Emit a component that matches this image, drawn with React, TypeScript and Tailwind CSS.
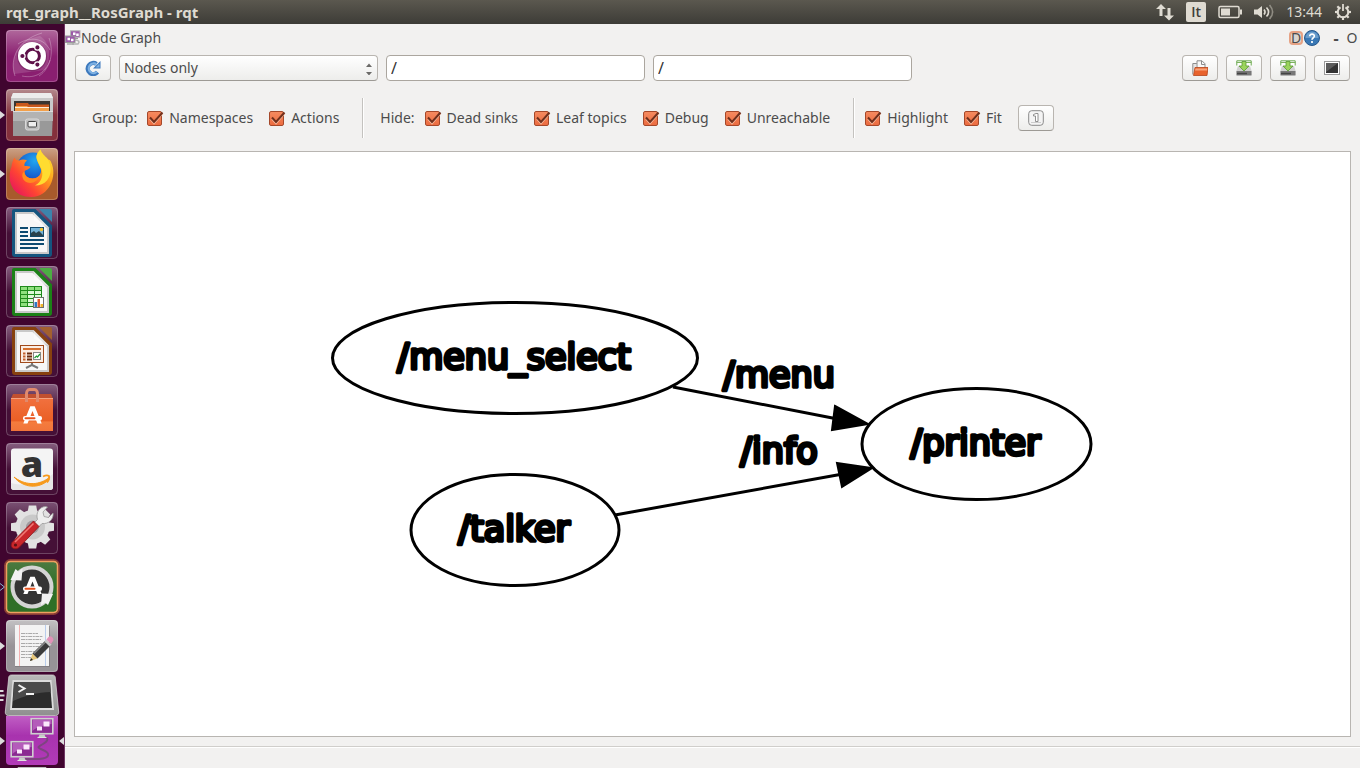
import React, { useId } from "react";

/* ---------- Launcher artwork ---------- */

type TileProps = { from: string; to: string; edge?: string; children: React.ReactNode };

function Tile({ from, to, edge = "#ffffff", children }: TileProps) {
  const id = useId();
  return (
    <svg viewBox="0 0 52 52" className="block h-[52px] w-[52px] overflow-visible" aria-hidden="true">
      <defs>
        <linearGradient id={id} x1="0" y1="0" x2="0" y2="1">
          <stop offset="0" stopColor={from} />
          <stop offset="0.5" stopColor={to} />
          <stop offset="1" stopColor={to} />
        </linearGradient>
      </defs>
      <rect x="0" y="0" width="52" height="52" rx="4" fill={`url(#${id})`} />
      <rect x="0.5" y="0.5" width="51" height="51" rx="4" fill="none" stroke={edge} strokeOpacity="0.22" />
      {children}
    </svg>
  );
}

function DashIcon() {
  return (
    <Tile from="#b0689c" to="#8a1f70">
      <path d="M8 44C4 26 14 9 34 6c10 6 12 22 5 34" fill="#fff" fillOpacity=".14" />
      <path d="M9 46C3 28 12 10 36 3M43 8c5 14 2 30-10 38M12 14c12-8 26-6 32 6M16 46c14 3 24-4 28-16" fill="none" stroke="#fff" strokeOpacity=".28" />
      <circle cx="26" cy="26.5" r="15" fill="#5d1049" fillOpacity=".4" />
      <circle cx="26" cy="26" r="14" fill="#fff" />
      <circle cx="26.6" cy="26" r="6.8" fill="none" stroke="#5e1049" strokeWidth="3" />
      <g stroke="#fff" strokeWidth="1.2">
        <circle cx="16.4" cy="26" r="2.7" fill="#5e1049" />
        <circle cx="31.4" cy="17.4" r="2.7" fill="#5e1049" />
        <circle cx="31.4" cy="34.6" r="2.7" fill="#5e1049" />
      </g>
    </Tile>
  );
}

function FilesIcon() {
  return (
    <Tile from="#b48a8d" to="#84303c">
      <path d="M7 4h38l2 5v13H5V9z" fill="#c9c9c9" />
      <path d="M7 4h38l2 5H5z" fill="#ececec" />
      <rect x="8" y="12" width="36" height="11" fill="#3a3532" />
      <path d="M10 14h12l1 1.5h20V24H10z" fill="#c9581d" />
      <path d="M9 17h12l1 1h21v6H9z" fill="#f3a04a" />
      <path d="M9 18.5h34" stroke="#fff" strokeOpacity=".8" />
      <path d="M7 22h40l-1 25H7z" fill="#999" />
      <path d="M7 22h40v10H7z" fill="#b3b3b3" />
      <path d="M7 22.5h40" stroke="#ddd" />
      <rect x="19.5" y="30" width="13.5" height="11" rx="2" fill="#bdbdbd" stroke="#d9d9d9" />
      <rect x="22" y="32.5" width="8.5" height="5.5" rx="1" fill="#eee" stroke="#444" />
    </Tile>
  );
}

function FirefoxIcon() {
  const id = useId();
  return (
    <Tile from="#cba186" to="#a85a2c">
      <defs>
        <linearGradient id={id + "f"} x1="0.9" y1="0.1" x2="0.1" y2="0.9">
          <stop offset="0" stopColor="#ffdf2e" />
          <stop offset="0.35" stopColor="#ff9a1c" />
          <stop offset="0.7" stopColor="#ff4433" />
          <stop offset="1" stopColor="#e8185b" />
        </linearGradient>
        <radialGradient id={id + "g"} cx="0.55" cy="0.25" r="0.8">
          <stop offset="0" stopColor="#22a7f0" />
          <stop offset="0.6" stopColor="#1660cf" />
          <stop offset="1" stopColor="#252a86" />
        </radialGradient>
      </defs>
      <circle cx="27" cy="21" r="16.5" fill={`url(#${id}g)`} />
      <path d="M8.500 9.500c1 2 2 3 4.500 3 3-1.500 6-1 8 0-2 1.500-3 3.500-2.500 5.500 3 0 5.500 0 6 1-1 2-4.500 3-6 4-.6 4.500 3.500 7.500 8 7.500 6 0 9-4.500 8.500-9C34 18 30 12 30.500 8 31 5 33 3 34.500 1.500c1 4.500 4.500 6 7.500 10 1.500 0 2.500 1 3 2.500 7 14-2 35-19.500 35C9 49 2 37 4 24c.5-3 1-4 1.500-5 .2-3.500 1.400-7 3-9.500z" fill={`url(#${id}f)`} />
      <path d="M34.500 1.500c1 4.500 4.500 6 7.500 10 3.500 6 4 15-1 21-3 3.500-7 5-12 5 7-3.500 8.500-11 6.500-16C33.500 16 30 12 30.500 8 31 5 33 3 34.500 1.500z" fill="#ffdc30" />
      <path d="M18.500 23c-.6 4.500 3.500 7.500 8 7.500 3 0 5.500-1 7-3-1.500 6-7 8.500-12 7-3.500-1-6-5-5-9z" fill="#ff8a1f" />
    </Tile>
  );
}

type DocProps = { color: string; light: string; children: React.ReactNode };

function OfficeIcon({ color, light, children }: DocProps) {
  return (
    <Tile from="#865f7f" to="#451037">
      <path d="M8 2h21.500L46 18.500V47a3 3 0 0 1-3 3H9a3 3 0 0 1-3-3V4a2 2 0 0 1 2-2z" fill={color} />
      <path d="M33 2h11a2 2 0 0 1 2 2v11z" fill={light} />
      <path d="M9 5h18.500L43 20.500V47H9z" fill="#c9c9c9" />
      <path d="M11 7h15.500L41 21.500V45H11z" fill="#f7f7f7" />
      <path d="M27.500 5L43 20.500 28 14z" fill="#fff" fillOpacity=".5" />
      {children}
    </Tile>
  );
}

function WriterIcon() {
  return (
    <OfficeIcon color="#14557f" light="#3c84ac">
      <path d="M14 21h8M14 25h8M14 29h8M14 33h24M14 37h24M14 41h18" stroke="#0d4a70" strokeWidth="2" />
      <rect x="24" y="20" width="14" height="10" fill="#124a6c" />
      <rect x="25" y="21" width="12" height="8" fill="#74b3d8" />
      <circle cx="35.500" cy="22.500" r="1.700" fill="#f2c12e" />
      <path d="M25 29v-3l3-2 2 2 3-2 4 4v1z" fill="#29424c" />
    </OfficeIcon>
  );
}

function CalcIcon() {
  return (
    <OfficeIcon color="#1b8117" light="#4cad43">
      <rect x="14" y="20" width="22" height="21" fill="#1f8a1c" />
      <g fill="#8fe07e">
        <path d="M15 21h6v3h-6zM22 21h6v3h-6zM29 21h6v3h-6z" />
        <path d="M15 25h6v3h-6zM15 29h6v3h-6zM15 33h6v3h-6zM15 37h6v3h-6z" />
      </g>
      <g fill="#dcf7d6">
        <path d="M22 25h6v3h-6zM29 25h6v3h-6zM22 29h6v3h-6zM29 29h6v3h-6zM22 33h6v3h-6zM22 37h6v3h-6z" />
      </g>
      <rect x="27.500" y="31.500" width="10" height="10" fill="#fff" stroke="#6f6f6f" />
      <path d="M28.500 36h2.500v5h-2.500z" fill="#2d78c4" />
      <path d="M31.500 33h2.500v8h-2.500z" fill="#e0592a" />
      <path d="M34.500 38h2.500v3h-2.500z" fill="#f0b429" />
    </OfficeIcon>
  );
}

function ImpressIcon() {
  return (
    <OfficeIcon color="#87410f" light="#a3602f">
      <path d="M26 38v2l-6 3M26 40l6 3" fill="none" stroke="#777" strokeWidth="2" />
      <rect x="14.500" y="20.500" width="23" height="17" fill="#fbeee4" stroke="#a04a1c" />
      <path d="M17 24h18" stroke="#d5702f" strokeWidth="2" />
      <path d="M17 28.500h2.500M17 31.500h2.500M17 34.500h2.500" stroke="#c2602c" strokeWidth="2" />
      <path d="M21 28.500h5M21 31.500h5M21 34.500h5" stroke="#6b2d10" strokeWidth="2" />
      <rect x="27.500" y="27.500" width="7" height="7" fill="#fff" stroke="#888" />
      <path d="M28.500 33l2-2 1 1 2.500-3" fill="none" stroke="#1f9a35" strokeWidth="1.200" />
    </OfficeIcon>
  );
}

function StoreMark({ dy, fill, bar }: { dy: number; fill: string; bar: string }) {
  return (
    <g transform={`translate(0 ${dy})`}>
      <path d="M17.300 39.500l7-17.300h4.400l7 17.300h-4.300L26.500 27l-5 12.500z" fill={fill} />
      <rect x="17" y="32" width="19" height="4.600" rx="2" fill={fill} />
      <rect x="18.500" y="33.300" width="11" height="2" rx="1" fill={bar} />
    </g>
  );
}

function SoftwareIcon() {
  const id = useId();
  return (
    <Tile from="#865f7f" to="#451037">
      <defs>
        <linearGradient id={id} x1="0" y1="0" x2="0" y2="1">
          <stop offset="0" stopColor="#f1713f" />
          <stop offset="0.7" stopColor="#ea5f25" />
          <stop offset="0.72" stopColor="#f57c3e" />
          <stop offset="1" stopColor="#f0743a" />
        </linearGradient>
      </defs>
      <path d="M7 10h38l2 4.500H5z" fill="#c1502f" />
      <path d="M5 14h42v33H5z" fill={`url(#${id})`} />
      <path d="M5 14.500h42" stroke="#f6a27e" />
      <path d="M20.500 18v-8c0-2 1-4.500 3-4.500h5c2 0 3 2.500 3 4.500v8" fill="none" stroke="#e08a6d" strokeWidth="3" />
      <StoreMark dy={0} fill="#fff" bar="#e95420" />
    </Tile>
  );
}

function AmazonIcon() {
  return (
    <Tile from="#865f7f" to="#451037">
      <rect x="5" y="5.500" width="42" height="41.500" rx="3" fill="#f4f4f4" />
      <path d="M8 47h36a3 3 0 0 0 3-3V31C36 40 20 44 5 40v4a3 3 0 0 0 3 3z" fill="#e6e6e6" />
      <text x="26" y="34" textAnchor="middle" fontSize="36" fontWeight="800" fill="#333" fontFamily="'Open Sans', sans-serif">a</text>
      <path d="M8 34c10 8 24 9 34 1.500l1 1C33 46.500 17 45 8 34z" fill="#f79a1c" stroke="#f79a1c" />
      <path d="M37 33.500c3-1.500 5-1.200 6-.5.500 2-.3 4.500-2 6.500" fill="none" stroke="#f79a1c" strokeWidth="1.800" />
    </Tile>
  );
}

const gearTeeth = [0, 45, 90, 135, 180, 225, 270, 315];

function SettingsIcon() {
  return (
    <Tile from="#7b5274" to="#451037">
      <g fill="#e2e2e2">
        {gearTeeth.map((angle) => (
          <path key={angle} d="M21.500 11l1.300-7.500h7.400l1.300 7.500z" transform={`rotate(${angle} 26.500 25)`} />
        ))}
        <circle cx="26.500" cy="25" r="17" />
      </g>
      <circle cx="26.500" cy="25" r="12.500" fill="#c9c9c9" />
      <circle cx="26.500" cy="25" r="6.500" fill="#a09a9f" />
      <path d="M28 21l3.500-3.500C29.500 11 33 5 39.500 4.500l2 .5-4.500 5 1 4.500 4.500 1L47 11c1 6-4.500 11.500-11 10.500l-3.500 3.500z" fill="#eee" stroke="#999" strokeWidth=".8" />
      <path d="M6 40.500L27.500 19l5.500 5.500L12.500 46c-5 2.500-9-1-6.500-5.500z" fill="#c9262b" stroke="#8c1418" strokeWidth=".8" />
      <path d="M9 40L27.500 21.500" stroke="#f07a76" strokeWidth="1.600" />
      <circle cx="9.500" cy="43" r="1.600" fill="#5e1012" />
    </Tile>
  );
}

function UpdaterIcon() {
  return (
    <Tile from="#4c7a42" to="#2f6f27">
      <rect x="-.5" y="-.5" width="53" height="53" rx="5" fill="none" stroke="#e5803d" strokeWidth="3" strokeOpacity=".45" />
      <rect x=".5" y=".5" width="51" height="51" rx="4" fill="none" stroke="#f0a060" strokeWidth="1.500" />
      <circle cx="26" cy="26" r="19.500" fill="#343434" stroke="#d4d4d4" strokeWidth="4" />
      <path d="M4.500 19l5-11 3 2.500 4-3-1 12z" fill="#f2f2f2" />
      <path d="M47 33l-5 11-3-2.500-4 3 1-12z" fill="#f2f2f2" />
      <StoreMark dy={-6.5} fill="#fff" bar="#e95420" />
    </Tile>
  );
}

function EditorIcon() {
  return (
    <Tile from="#c3c1c3" to="#979397">
      <rect x="9" y="6" width="35" height="41" fill="#6d696d" fillOpacity=".5" />
      <rect x="9" y="5" width="34" height="41" fill="#f3f3f3" />
      <path d="M13.500 5v41" stroke="#f3b1b1" />
      <path d="M39.500 5v41" stroke="#b9cdec" />
      <path d="M15 13.500h17M15 16.500h22M15 19.500h20M15 23.500h21M15 26.500h18M15 31.500h16M15 34.500h12M15 37.500h10" stroke="#a9a9a9" strokeDasharray="4 .6 2 .6" />
      <path d="M24 41l2.500-7.500 5 5z" fill="#e8c87a" />
      <path d="M24 41l1-3 2 2z" fill="#222" />
      <path d="M26.500 33.500L39 21l5 5-12.500 12.500z" fill="#3b3b3b" />
      <path d="M28 33.500L40 21.500" stroke="#888" strokeWidth="1.500" />
      <path d="M38.500 21.500l2-2 5 5-2 2z" fill="#c9c9c9" />
      <path d="M40.500 19.500l2-2.500c1-1 2.500-1 3.500 0s2 2.500 1 4l-2 3z" fill="#e292b8" />
    </Tile>
  );
}

function TerminalIcon() {
  const id = useId();
  return (
    <svg viewBox="0 0 52 42" className="block h-[42px] w-[52px] overflow-visible" aria-hidden="true">
      <defs>
        <linearGradient id={id} x1="0" y1="0" x2="0" y2="1">
          <stop offset="0" stopColor="#b9b9b9" />
          <stop offset="1" stopColor="#8f8f8f" />
        </linearGradient>
      </defs>
      <path d="M5.500 1h41c1.500 0 2.300.7 2.700 2l3.500 35c.2 2-1 3.500-3 3.500H2.300c-2 0-3.200-1.500-3-3.500L2.800 3C3.200 1.700 4 1 5.500 1z" fill={`url(#${id})`} stroke="#d2d2d2" strokeWidth=".8" />
      <path d="M6.500 6h39L48 36H4z" fill="#dcdcdc" />
      <path d="M8 8h36l2 26H6z" fill="#2b2b2b" />
      <path d="M8 8h36l.8 10C32 18 18 22 7 27z" fill="#4a4a4a" />
      <path d="M12.500 11l6 3.500-6 3.500" fill="none" stroke="#f2f2f2" strokeWidth="2" />
      <path d="M20 20h8" stroke="#f2f2f2" strokeWidth="2" />
    </svg>
  );
}

function Monitor({ x, y }: { x: number; y: number }) {
  return (
    <g transform={`translate(${x} ${y})`}>
      <rect x=".7" y=".7" width="21.600" height="15" fill="#8b2a92" stroke="#cfcfcf" strokeWidth="1.600" />
      <path d="M2 2h19v4C14 7 6 9 2 13z" fill="#b45cba" />
      <path d="M13 3.500h6v5h-6zM6.500 8.500h5v4h-5z" fill="#fbe6fb" />
      <path d="M9 16.500h5l1 2.500H8z" fill="#c8d0c8" />
      <path d="M7 19.500h9" stroke="#dfe6df" />
    </g>
  );
}

function RqtIcon() {
  const id = useId();
  return (
    <svg viewBox="0 0 52 49" className="block h-[49px] w-[52px]" aria-hidden="true">
      <defs>
        <linearGradient id={id} x1="0" y1="0" x2="0" y2="1">
          <stop offset="0" stopColor="#c05ec4" />
          <stop offset="0.4" stopColor="#a833ae" />
          <stop offset="1" stopColor="#b23ab8" />
        </linearGradient>
      </defs>
      <path d="M0 0h52v45a4 4 0 0 1-4 4H4a4 4 0 0 1-4-4z" fill={`url(#${id})`} />
      <path d="M36 21c8 0 6 4 1 7s-7 3 0 6 8 8-4 9H16" fill="none" stroke="#7d4580" strokeWidth="2" />
      <Monitor x={24.5} y={2} />
      <Monitor x={4.5} y={25} />
    </svg>
  );
}

function NextIcon() {
  return (
    <svg viewBox="0 0 52 8" className="block h-2 w-[52px]" aria-hidden="true">
      <path d="M12 .5h28l2 7H10z" fill="#555" stroke="#bdbdbd" />
    </svg>
  );
}

/* ---------- Launcher ---------- */

type Mark = "none" | "running" | "outline" | "stack";

function RunningMark({ kind }: { kind: Mark }) {
  return (
    <svg viewBox="0 0 6 12" className="h-3 w-1.5 shrink-0" aria-hidden="true">
      {kind === "running" && <path d="M0 2l5 4-5 4z" fill="#dcdcdc" />}
      {kind === "outline" && <path d="M0 2.500L4.500 6 0 9.500" fill="none" stroke="#86b9d6" />}
      {kind === "stack" && <path d="M0 2h3.500M0 6.500h4.500M0 11h3.500" stroke="#dcdcdc" strokeWidth="2" />}
    </svg>
  );
}

type App = { name: string; mark: Mark; icon: React.ReactNode; focused?: boolean };

const openTiles: App[] = [
  { name: "Search your computer", mark: "none", icon: <DashIcon /> },
  { name: "Files", mark: "running", icon: <FilesIcon /> },
  { name: "Firefox Web Browser", mark: "running", icon: <FirefoxIcon /> },
  { name: "LibreOffice Writer", mark: "none", icon: <WriterIcon /> },
  { name: "LibreOffice Calc", mark: "none", icon: <CalcIcon /> },
  { name: "LibreOffice Impress", mark: "none", icon: <ImpressIcon /> },
  { name: "Ubuntu Software", mark: "none", icon: <SoftwareIcon /> },
  { name: "Amazon", mark: "none", icon: <AmazonIcon /> },
  { name: "System Settings", mark: "none", icon: <SettingsIcon /> },
  { name: "Software Updater", mark: "outline", icon: <UpdaterIcon /> },
  { name: "Text Editor", mark: "running", icon: <EditorIcon /> },
];

const foldedTiles: App[] = [
  { name: "Terminal", mark: "stack", icon: <TerminalIcon /> },
  { name: "rqt", mark: "running", icon: <RqtIcon />, focused: true },
  { name: "Disk", mark: "none", icon: <NextIcon /> },
];

function LauncherItem({ app }: { app: App }) {
  return (
    <li className="flex items-center">
      <RunningMark kind={app.mark} />
      <button type="button" aria-label={app.name} className="block">
        {app.icon}
      </button>
      {app.focused && (
        <svg viewBox="0 0 6 12" className="h-3 w-1.5 shrink-0" aria-hidden="true">
          <path d="M6 2L1 6l5 4z" fill="#dcdcdc" />
        </svg>
      )}
    </li>
  );
}

function Launcher() {
  return (
    <nav aria-label="Launcher" className="w-[65px] shrink-0 overflow-hidden border-r border-[#6f3763] bg-[#40052f] pt-1.5">
      <ul className="flex flex-col gap-[7px]">
        {openTiles.map((app) => (
          <LauncherItem key={app.name} app={app} />
        ))}
      </ul>
      <ul className="mt-0.5 flex flex-col">
        {foldedTiles.map((app) => (
          <LauncherItem key={app.name} app={app} />
        ))}
      </ul>
    </nav>
  );
}

/* ---------- Top panel ---------- */

function TopPanel() {
  return (
    <header className="flex h-6 shrink-0 items-center justify-between bg-linear-to-b from-[#5b584f] to-[#3d3c37] pr-2 pl-1.5 text-[#dfdbd2]">
      <h1 className="text-[15px] leading-6 font-bold">rqt_graph__RosGraph - rqt</h1>
      <div className="flex items-center gap-3">
        <svg viewBox="0 0 18 18" className="h-[18px] w-[18px]" fill="#dfdbd2" aria-label="Network">
          <path d="M5 1l5 5H6.500v7h-3V6H0zM13 17.500l-5-5h3.500V5h3v7.500H18z" />
        </svg>
        <span className="flex h-5 w-5 items-center justify-center rounded-[2px] bg-[#dfdbd2] font-['Open_Sans',sans-serif] text-sm font-semibold text-[#3f3e39]">It</span>
        <svg viewBox="0 0 24 14" className="h-3.5 w-6" aria-label="Battery">
          <rect x="1" y="1.500" width="20" height="11" rx="1.500" fill="none" stroke="#dfdbd2" strokeWidth="1.500" />
          <path d="M3 3.500h9v7H3z" fill="#dfdbd2" />
          <path d="M22 4.500h2v5h-2z" fill="#dfdbd2" />
        </svg>
        <svg viewBox="0 0 20 16" className="h-4 w-5" fill="none" strokeWidth="1.600" aria-label="Sound">
          <path d="M0 5.500h3.500L8 2v12l-4.500-3.500H0z" fill="#dfdbd2" />
          <path d="M10 5.500c1.300 1.500 1.300 3.500 0 5M12.500 3.500c2.500 2.700 2.500 6.300 0 9" stroke="#dfdbd2" />
          <path d="M15.500 1c4 4.500 4 9.500 0 14" stroke="#8f8c83" />
        </svg>
        <time className="text-sm leading-6">13:44</time>
        <svg viewBox="0 0 18 18" className="h-[18px] w-[18px]" fill="none" stroke="#dfdbd2" aria-label="Session">
          {gearTeeth.map((angle) =>
            angle === 0 ? null : (
              <path key={angle} d="M9 1v3.500" strokeWidth="2.200" transform={`rotate(${angle} 9 9)`} />
            ),
          )}
          <path d="M6.500 4.300a5.300 5.300 0 1 0 5 0" strokeWidth="2" />
          <path d="M9 1v7" strokeWidth="1.800" />
        </svg>
      </div>
    </header>
  );
}

/* ---------- Plugin window ---------- */

const buttonLook =
  "flex h-[26px] w-9 shrink-0 items-center justify-center rounded-sm border border-[#b9b5b0] border-b-[#9d9a95] bg-linear-to-b from-white to-[#ededeb]";

function ToolButton({ label, children }: { label: string; children: React.ReactNode }) {
  return (
    <button type="button" aria-label={label} className={buttonLook}>
      {children}
    </button>
  );
}

function DockTitle() {
  return (
    <div className="flex h-[27px] items-center pr-0.5">
      <svg viewBox="0 0 16 16" className="h-4 w-4" aria-hidden="true">
        <path d="M10 10c4 0 5 2 3 4H7" fill="none" stroke="#b5b5b5" strokeWidth="1.500" />
        <rect x="5.500" y=".8" width="9.500" height="6.500" fill="#9d5aaa" stroke="#b5b5b5" />
        <path d="M8 2.500h2.500V5H8zM11.200 3.500h2.500V6h-2.500z" fill="#fff" />
        <path d="M9 8.500h4" stroke="#999" />
        <rect x=".5" y="6" width="9.500" height="6.500" fill="#9d5aaa" stroke="#999" />
        <path d="M2.500 7.800H5v2.400H2.500zM6 8.800h2.500v2.400H6z" fill="#fff" />
        <path d="M2 14h7" stroke="#aaa" strokeWidth="1.500" />
      </svg>
      <h2 className="flex-1 text-sm leading-6">Node Graph</h2>
      <button type="button" aria-label="Toggle dock widget" className="flex h-3.5 w-3.5 items-center justify-center rounded border-2 border-[#e6a183] bg-[#d9d5d1] text-sm leading-3">
        D
      </button>
      <button type="button" aria-label="Help" className="ml-px">
        <svg viewBox="0 0 16 16" className="block h-4 w-4" aria-hidden="true">
          <circle cx="8" cy="8" r="7.500" fill="#3a78b5" stroke="#27588c" />
          <path d="M1.500 8a6.500 6.500 0 0 1 13 0z" fill="#6a9ccb" />
          <path d="M5.700 6.300C5.700 3.300 10.500 3.500 10.300 6.200 10.200 7.800 8 8 8 9.800M8 11v2" fill="none" stroke="#fff" strokeWidth="1.700" />
        </svg>
      </button>
      <button type="button" className="ml-2.5 w-3 text-base leading-6 font-bold" aria-label="Minimise">-</button>
      <button type="button" className="ml-1 w-3 text-sm leading-6" aria-label="Close">O</button>
    </div>
  );
}

function SaveIcon() {
  return (
    <svg viewBox="0 0 16 16" className="h-4 w-4" aria-hidden="true">
      <path d="M2 6h12l1.500 4.500V15H.5v-4.500z" fill="#cfcfcf" />
      <path d="M.5 11h15v4.500H.5z" fill="#777" />
      <path d="M1 13.500h10" stroke="#444" strokeWidth="1.500" />
      <path d="M.8 5.500V.8h14.400v4.700" fill="#fff" stroke="#6aa84f" strokeWidth="1" />
      <path d="M.5 2.500h15" stroke="#7db35f" />
      <path d="M6 1.500h4V6h3l-5 5-5-5h3z" fill="#9bd45c" stroke="#5a9a33" strokeWidth=".8" />
    </svg>
  );
}

function FilterInput({ label }: { label: string }) {
  return (
    <input
      aria-label={label}
      defaultValue="/"
      className="h-[26px] w-[259px] rounded-sm border border-[#aba69f] bg-white px-1 text-base text-[#333]"
    />
  );
}

function Toolbar() {
  return (
    <div className="flex items-center gap-2 py-1 pr-2.5 pl-2.5">
      <ToolButton label="Refresh ROS graph">
        <svg viewBox="0 0 16 16" className="h-4 w-4" fill="none" aria-hidden="true">
          <path d="M12.500 12.200A5.600 5.600 0 1 1 11.500 4" stroke="#3d79bd" strokeWidth="4.200" />
          <path d="M15.500 1v7.500H8z" fill="#3d79bd" />
          <path d="M11.800 11.800A4.800 4.800 0 1 1 11.500 4.500" stroke="#7db1e3" strokeWidth="2.200" />
          <path d="M14.500 3.500v4h-4z" fill="#7db1e3" />
        </svg>
      </ToolButton>
      <div className="relative w-[259px]">
        <select
          aria-label="Graph type"
          defaultValue="Nodes only"
          className="block h-[26px] w-full appearance-none rounded-sm border border-[#b9b5b0] border-b-[#9d9a95] bg-linear-to-b from-white to-[#ededeb] pr-5 pl-1 text-sm"
        >
          <option>Nodes only</option>
          <option>Nodes/Topics (active)</option>
          <option>Nodes/Topics (all)</option>
        </select>
        <svg viewBox="0 0 6 12" className="pointer-events-none absolute top-2 right-1.5 h-3 w-1.5" fill="#6b6a68" aria-hidden="true">
          <path d="M0 4l3-3.500L6 4zM0 9l3 3.500L6 9z" />
        </svg>
      </div>
      <FilterInput label="Node filter" />
      <FilterInput label="Topic filter" />
      <div className="flex flex-1 justify-end gap-2">
        <ToolButton label="Load DOT graph">
          <svg viewBox="0 0 16 16" className="h-4 w-4" aria-hidden="true">
            <path d="M.8 14.500V3.500h4" fill="#e5e5e5" stroke="#8c8c8c" />
            <path d="M5 9V.8h5l3 3V9z" fill="#f8f8f8" stroke="#8c8c8c" />
            <path d="M9.500 1v3.500H13" fill="none" stroke="#8c8c8c" />
            <path d="M3 7.500h13l-1 8H1.500z" fill="#e8622c" stroke="#b5451a" strokeWidth=".8" />
            <path d="M3.500 8.500h11.500v2H3z" fill="#f7a37a" />
          </svg>
        </ToolButton>
        <ToolButton label="Save as DOT graph"><SaveIcon /></ToolButton>
        <ToolButton label="Save as SVG"><SaveIcon /></ToolButton>
        <ToolButton label="Save as image">
          <svg viewBox="0 0 16 14" className="h-3.5 w-4" aria-hidden="true">
            <rect x=".5" y=".5" width="15" height="13" fill="#fff" stroke="#9a9a9a" />
            <rect x="2" y="2" width="12" height="10" fill="#333" />
            <path d="M2 2h12L2 11z" fill="#5c5c5c" />
          </svg>
        </ToolButton>
      </div>
    </div>
  );
}

function Check({ label }: { label: string }) {
  return (
    <label className="flex items-center gap-[7px] text-sm">
      <span className="grid">
        <input
          type="checkbox"
          defaultChecked
          className="peer col-start-1 row-start-1 h-[15px] w-[15px] appearance-none rounded-[2px] border border-[#b9b5b0] bg-white checked:border-[#a5482a] checked:bg-linear-to-b checked:from-[#f58a5f] checked:to-[#ec6c40]"
        />
        <svg viewBox="0 0 15 15" className="pointer-events-none invisible col-start-1 row-start-1 h-[15px] w-[15px] overflow-visible peer-checked:visible" fill="none" aria-hidden="true">
          <path d="M3 8l4 4.500 8.500-10" stroke="#fbc0a5" strokeWidth="1.500" />
          <path d="M3 6.500l4 4.500 8.500-9.500" stroke="#71301c" strokeWidth="2" />
        </svg>
      </span>
      {label}
    </label>
  );
}

function Divider() {
  return <div className="h-10 w-0.5 border-r border-l border-r-white border-l-[#c4c2bf]" />;
}

function Options() {
  return (
    <div className="flex h-[66px] items-center pl-[27px] text-sm">
      <div role="group" aria-labelledby="group-options" className="flex items-center gap-4">
        <span id="group-options" className="-mr-1.5">Group:</span>
        <Check label="Namespaces" />
        <Check label="Actions" />
      </div>
      <div className="pr-4 pl-[23px]"><Divider /></div>
      <div role="group" aria-labelledby="hide-options" className="flex items-center gap-4">
        <span id="hide-options" className="-mr-1.5">Hide:</span>
        <Check label="Dead sinks" />
        <Check label="Leaf topics" />
        <Check label="Debug" />
        <Check label="Unreachable" />
      </div>
      <div className="pr-2.5 pl-[23px]"><Divider /></div>
      <div className="flex items-center gap-4">
        <Check label="Highlight" />
        <Check label="Fit" />
        <ToolButton label="Fit in view">
          <svg viewBox="0 0 16 16" className="h-4 w-4" aria-hidden="true">
            <rect x=".7" y=".7" width="14.600" height="14.600" rx="3" fill="#f4f4f4" stroke="#8a8a8a" />
            <path d="M3 12.500h10" stroke="#ccc" />
            <path d="M5.500 6V4.500L8 3.500h2v8H7.500V6z" fill="#fff" stroke="#858585" strokeWidth=".9" />
          </svg>
        </ToolButton>
      </div>
    </div>
  );
}

/* ---------- Graph ---------- */

const nodes = [
  { name: "/menu_select", cx: 440, cy: 206, rx: 182.500 },
  { name: "/talker", cx: 440, cy: 378, rx: 104 },
  { name: "/printer", cx: 901.500, cy: 292, rx: 114.500 },
];

const edges = [
  { name: "/menu", x: 704, y: 235, line: "M598 235L760 266.500", head: "760,254 793,272 757,278" },
  { name: "/info", x: 704, y: 311, line: "M540 363L765 322.500", head: "762,311 797,316 767,335" },
];

function Graph() {
  return (
    <div className="mx-[9px] min-h-0 flex-1 border border-[#b8b5b1] bg-white">
      <svg viewBox="0 0 1275 584" className="block h-full w-full" role="img" aria-label="ROS node graph">
        <g fill="none" stroke="#000" strokeWidth="3">
          {nodes.map((n) => (
            <ellipse key={n.name} cx={n.cx} cy={n.cy} rx={n.rx} ry="55.500" />
          ))}
          {edges.map((e) => (
            <path key={e.name} d={e.line} />
          ))}
        </g>
        {edges.map((e) => (
          <polygon key={e.name} points={e.head} stroke="#000" strokeWidth="2" />
        ))}
        <g fontFamily="'DejaVu Sans', sans-serif" fontSize="35" textAnchor="middle" stroke="#000" strokeWidth="3.600" strokeLinejoin="round">
          {nodes.map((n) => (
            <text key={n.name} x={n.cx - 1} y={n.cy + 11}>{n.name}</text>
          ))}
          {edges.map((e) => (
            <text key={e.name} x={e.x} y={e.y}>{e.name}</text>
          ))}
        </g>
      </svg>
    </div>
  );
}

export default function App() {
  return (
    <div className="flex h-screen flex-col overflow-hidden bg-[#f2f1f0] font-['Noto_Sans',sans-serif] text-[#4c4c4c]">
      <TopPanel />
      <div className="flex min-h-0 flex-1">
        <Launcher />
        <main className="flex min-w-0 flex-1 flex-col">
          <DockTitle />
          <Toolbar />
          <Options />
          <Graph />
          <footer className="mt-[9px] h-[22px] shrink-0 border-t border-[#d0cecb] shadow-[inset_0_1px_0_#ffffff]" />
        </main>
      </div>
    </div>
  );
}
